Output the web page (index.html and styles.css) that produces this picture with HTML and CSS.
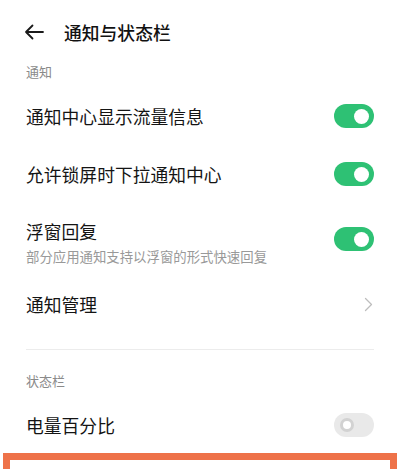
FILE: index.html
```html
<!DOCTYPE html>
<html lang="zh-CN">
<head>
<meta charset="utf-8">
<link rel="stylesheet" href="styles.css">
</head>
<body>
<div class="page">
  <header class="header">
    <svg class="back" width="20" height="16" viewBox="0 0 20 16"><path d="M19 8H2M8.5 1.5L2 8l6.5 6.5" fill="none" stroke="#1a1a1a" stroke-width="1.8" stroke-linecap="round" stroke-linejoin="round"/></svg>
    <h1 class="title">通知与状态栏</h1>
  </header>

  <div class="section-label">通知</div>

  <div class="row">
    <div class="row-text">通知中心显示流量信息</div>
    <span class="toggle on"><span class="knob"></span></span>
  </div>
  <div class="row">
    <div class="row-text">允许锁屏时下拉通知中心</div>
    <span class="toggle on"><span class="knob"></span></span>
  </div>
  <div class="row row-tall">
    <div class="row-body">
      <div class="row-text">浮窗回复</div>
      <div class="row-sub">部分应用通知支持以浮窗的形式快速回复</div>
    </div>
    <span class="toggle on raised"><span class="knob"></span></span>
  </div>
  <div class="row">
    <div class="row-text">通知管理</div>
    <svg class="chevron" width="9" height="15" viewBox="0 0 9 15"><path d="M1.5 1.5L7.5 7.5L1.5 13.5" fill="none" stroke="#bdbdbd" stroke-width="1.3" stroke-linecap="round" stroke-linejoin="round"/></svg>
  </div>

  <div class="divider"></div>

  <div class="section-label second">状态栏</div>

  <div class="row">
    <div class="row-text">电量百分比</div>
    <span class="toggle off"><span class="knob"></span></span>
  </div>

  <div class="highlight"></div>
</div>
</body>
</html>
```

FILE: styles.css
```css
* { box-sizing: border-box; }
html, body {
  margin: 0;
  padding: 0;
  background: #ffffff;
  overflow: hidden;
}
body {
  font-family: "Noto Sans CJK SC", "Noto Sans", sans-serif;
  color: #161616;
}
.page {
  width: 407px;
  height: 469px;
  overflow: hidden;
}
.header {
  height: 64px;
  display: flex;
  align-items: center;
  padding-left: 24px;
}
.back {
  display: block;
  margin-right: 20px;
}
.title {
  margin: 0;
  font-size: 17.8px;
  font-weight: 500;
  line-height: 24px;
  color: #111;
}
.section-label {
  margin: 0 26px 7px;
  font-size: 13px;
  line-height: 16px;
  color: #8a8a8a;
}
.section-label.second {
  margin-top: 23px;
}
.row {
  height: 58px;
  margin: 0 33px 0 26px;
  display: flex;
  align-items: center;
  justify-content: space-between;
}
.row-tall {
  height: 72px;
  padding: 16px 0 9px;
}
.row-text {
  font-size: 17.8px;
  line-height: 24px;
  color: #141414;
}
.row-sub {
  margin-top: 3px;
  font-size: 13.4px;
  line-height: 20px;
  color: #999999;
}
.toggle {
  position: relative;
  flex: none;
  width: 40px;
  height: 24px;
  border-radius: 12px;
  display: flex;
  align-items: center;
}
.toggle.raised {
  margin-bottom: 7px;
}
.toggle.on {
  background: #2ec174;
  justify-content: flex-end;
  padding-right: 5px;
}
.toggle.on .knob {
  width: 15px;
  height: 15px;
  border-radius: 50%;
  background: #ffffff;
}
.toggle.off {
  background: #e9e9e9;
  justify-content: flex-start;
  padding-left: 6px;
}
.toggle.off .knob {
  width: 14px;
  height: 14px;
  border-radius: 50%;
  background: #ffffff;
  border: 3px solid #d2d2d2;
}
.chevron {
  display: block;
  margin-right: 1px;
}
.divider {
  height: 1px;
  margin: 16px 33px 0 26px;
  background: #ececec;
}
.highlight {
  margin: -1px 10px 0 3px;
  height: 60px;
  border: 7px solid #ee7249;
  border-bottom: none;
}
```
